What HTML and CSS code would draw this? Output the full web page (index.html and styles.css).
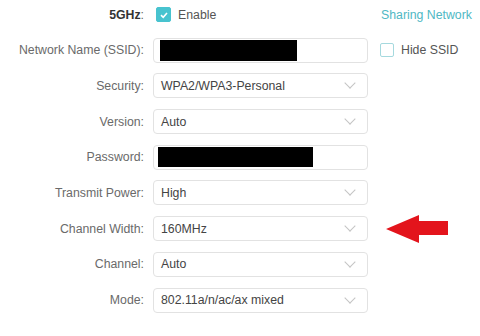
FILE: index.html
```html
<!DOCTYPE html>
<html lang="en">
  <head>
    <meta charset="UTF-8" />
    <meta name="viewport" content="width=device-width, initial-scale=1.0" />
    <title>Wireless Settings</title>
    <link rel="stylesheet" href="styles.css">
  </head>
  <body>
    <div class="form">
      <div class="row">
        <label class="label strong"><b>5GHz</b>:</label>
        <div class="field">
          <span class="check on">
            <svg width="10" height="10" viewBox="0 0 10 10"><path d="M2 5.2 L4.2 7.3 L8 3" fill="none" stroke="#fff" stroke-width="1.6"/></svg>
          </span>
          <span class="check-text">Enable</span>
        </div>
        <div class="extra"><a class="link">Sharing Network</a></div>
      </div>

      <div class="row">
        <label class="label">Network Name (SSID):</label>
        <div class="field box"><span class="mask ssid"></span></div>
        <div class="extra">
          <span class="check"></span>
          <span class="check-text">Hide SSID</span>
        </div>
      </div>

      <div class="row">
        <label class="label">Security:</label>
        <div class="field box select"><span>WPA2/WPA3-Personal</span><i class="chev"></i></div>
      </div>

      <div class="row">
        <label class="label">Version:</label>
        <div class="field box select"><span>Auto</span><i class="chev"></i></div>
      </div>

      <div class="row">
        <label class="label">Password:</label>
        <div class="field box"><span class="mask pass"></span></div>
      </div>

      <div class="row">
        <label class="label">Transmit Power:</label>
        <div class="field box select"><span>High</span><i class="chev"></i></div>
      </div>

      <div class="row">
        <label class="label">Channel Width:</label>
        <div class="field box select"><span>160MHz</span><i class="chev"></i></div>
        <div class="extra">
          <svg class="arrow" width="62" height="28" viewBox="0 0 62 28">
            <polygon points="0,14 33,0 33,6 62,6 62,20 33,20 33,28" fill="#e3141c"/>
          </svg>
        </div>
      </div>

      <div class="row">
        <label class="label">Channel:</label>
        <div class="field box select"><span>Auto</span><i class="chev"></i></div>
      </div>

      <div class="row">
        <label class="label">Mode:</label>
        <div class="field box select"><span>802.11a/n/ac/ax mixed</span><i class="chev"></i></div>
      </div>
    </div>
  </body>
</html>
```

FILE: styles.css
```css
* {
  margin: 0;
  padding: 0;
  box-sizing: border-box;
}

body {
  background: #fff;
  font-family: "Liberation Sans", Arial, sans-serif;
  font-size: 12.3px;
  color: #555;
}

.form {
  padding-top: 2px;

  > .row {
    display: flex;
    align-items: center;
    height: 25px;
    margin-bottom: 10.7px;
  }
}

.label {
  width: 144px;
  text-align: right;
  color: #6a6a6a;

  &.strong b {
    color: #333;
  }
}

.field {
  width: 215px;
  height: 25px;
  margin-left: 9px;
  display: flex;
  align-items: center;
  padding-left: 3px;

  &.box {
    border: 1px solid #e2e2e2;
    border-radius: 4px;
    padding: 0 10px 0 7px;
    color: #444;
  }

  &.select {
    justify-content: space-between;
  }
}

.extra {
  margin-left: 12px;
  display: flex;
  align-items: center;
}

.check {
  width: 14px;
  height: 14px;
  border: 1px solid #a5d9de;
  border-radius: 2px;
  display: inline-flex;
  align-items: center;
  justify-content: center;

  &.on {
    width: 15px;
    height: 15px;
    background: #48c3cf;
    border-color: #48c3cf;
  }
}

.check-text {
  margin-left: 7px;
  color: #555;
}

.link {
  color: #4fb8c4;
  margin-left: 1px;
}

.mask {
  display: block;
  background: #000;
  height: 21px;

  &.ssid {
    width: 137px;
    margin-left: -1px;
  }

  &.pass {
    width: 155px;
    height: 20px;
    margin-left: -3px;
  }
}

.chev {
  width: 8px;
  height: 8px;
  border-right: 1.5px solid #c4c4c4;
  border-bottom: 1.5px solid #c4c4c4;
  transform: rotate(45deg);
  margin-top: -5px;
  margin-right: 3px;
}

.arrow {
  margin-left: 6px;
}
```
